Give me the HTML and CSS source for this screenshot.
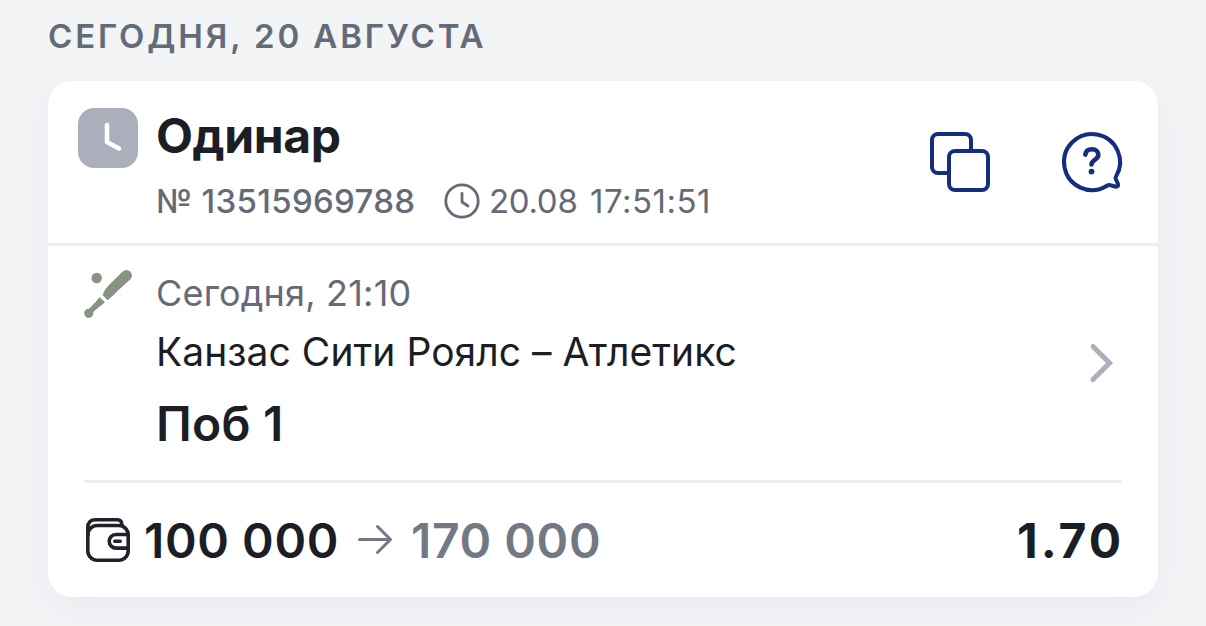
FILE: index.html
```html
<!DOCTYPE html>
<html lang="ru">
<head>
    <meta charset="UTF-8">
    <meta name="viewport" content="width=device-width, initial-scale=1.0">
    <title>История ставок</title>
    <link rel="stylesheet" href="styles.css">
</head>
<body>
    <h2 class="day-title">СЕГОДНЯ, 20 АВГУСТА</h2>
    <div class="bet-card">
        <div class="bet-header">
            <div class="bet-status">
                <svg width="60" height="60" viewBox="0 0 60 60" fill="none" stroke="#fff" stroke-width="4.6" stroke-linecap="round" stroke-linejoin="round">
                    <path d="M29 17v17l12 6.500"/>
                </svg>
            </div>
            <div class="bet-info">
                <div class="bet-type">Одинар</div>
                <div class="bet-meta">
                    <span class="bet-number">№ 13515969788</span>
                    <svg class="clock" width="36" height="36" viewBox="0 0 36 36" fill="none" stroke="#646a76" stroke-width="2.8" stroke-linecap="round" stroke-linejoin="round">
                        <circle cx="18" cy="18" r="16.2"/>
                        <path d="M18 10.500v8.500l6 4"/>
                    </svg>
                    <span class="bet-date">20.08</span>
                    <span class="bet-time">17:51:51</span>
                </div>
            </div>
            <div class="bet-actions">
                <svg width="60" height="60" viewBox="0 0 60 60" fill="none" stroke="#142d7d" stroke-width="4" stroke-linejoin="round">
                    <path d="M17 41H8a6 6 0 0 1-6-6V8a6 6 0 0 1 6-6h27a6 6 0 0 1 6 6v10"/>
                    <rect x="19" y="19" width="39" height="39" rx="6"/>
                </svg>
                <svg width="60" height="60" viewBox="0 0 60 60" fill="none" stroke="#142d7d" stroke-width="4" stroke-linecap="round" stroke-linejoin="round">
                    <path d="M54 44.500A28 28 0 1 0 44.500 54Q47 52.500 49.500 53.500L54 54.700Q56.500 55 56 52L53.800 47Q53.200 45.700 54 44.500Z"/>
                    <path d="M23.300 22.600C23.800 19.300 26.300 17.300 30 17.300c4 0 6.300 2.500 6.300 5.700 0 4.700-6.800 5-6.800 9.500" stroke-width="4.600"/>
                    <circle cx="29.500" cy="39.600" r="2.900" fill="#142d7d" stroke="none"/>
                </svg>
            </div>
        </div>

        <div class="event">
            <div class="sport">
                <svg width="48" height="48" viewBox="0 0 48 48" fill="#869581">
                    <circle cx="12.700" cy="8" r="5.200"/>
                    <path d="M18.500 25Q20 20 24.500 15.500L38 2Q42.500-1.800 46.400 1.600Q49.500 5.500 46.400 9.300L33 21.500Q28 27 23.600 30.300Z"/>
                    <path d="M15.500 27 21 32.200 17 35.500 9.200 42A4.600 4.600 0 1 1 5 38.700L12.500 31Z"/>
                </svg>
            </div>
            <div class="event-info">
                <div class="event-date">Сегодня, 21:10</div>
                <div class="event-teams">Канзас Сити Роялс – Атлетикс</div>
                <div class="event-outcome">Поб 1</div>
            </div>
            <svg class="chevron" width="24" height="40" viewBox="0 0 24 40" fill="none" stroke="#abafbc" stroke-width="5" stroke-linecap="round" stroke-linejoin="miter">
                <path d="M3 3.500 19.500 20 3 36.500"/>
            </svg>
        </div>

        <div class="bet-footer">
            <svg class="wallet" width="44" height="44" viewBox="0 0 44 44" fill="none" stroke="#1f2229" stroke-width="3.600" stroke-linecap="round" stroke-linejoin="round">
                <rect x="1.800" y="7.500" width="40.400" height="34.700" rx="9.500"/>
                <path d="M1.800 17V9.500C1.800 4.300 4.500 1.800 9.500 1.800H31.500Q36 1.800 36 7.500"/>
                <path d="M42 16.500H30a6.800 6.800 0 0 0 0 13.600h12M28.800 23.300h5.400"/>
            </svg>
            <span class="stake">100 000</span>
            <svg class="arrow" width="34" height="30" viewBox="0 0 34 30" fill="none" stroke="#727985" stroke-width="3" stroke-linecap="round" stroke-linejoin="round">
                <path d="M1.500 14.500h31M19.500 1.500 32.500 14.500 19.500 27.500"/>
            </svg>
            <span class="payout">170 000</span>
            <span class="odds">1.70</span>
        </div>
    </div>
</body>
</html>
```
FILE: styles.css
```css
body {
    font-family: Inter, sans-serif;
    margin: 0;
    padding: 0 48px;
    height: 626px;
    overflow: hidden;
    background-color: #f3f4f6;
    color: #1c1e25;
}

svg {
    display: block;
    flex-shrink: 0;
    overflow: visible;
}

.day-title {
    margin: 0;
    padding: 16px 0 25px;
    font-size: 33px;
    line-height: 40px;
    font-weight: 600;
    letter-spacing: 2.87px;
    color: #646b78;
    white-space: nowrap;
}

.bet-card {
    height: 516px;
    background-color: #fff;
    border-radius: 24px;
    box-shadow: 0 12px 36px rgba(50, 50, 90, 0.05);
    white-space: nowrap;
}

.bet-header {
    display: flex;
    height: 162px;
    border-bottom: 3px solid #eeeff2;
}

.bet-status {
    width: 60px;
    height: 60px;
    margin: 27px 18px 0 30px;
    border-radius: 16px;
    background-color: #abafbc;
}

.bet-info {
    flex: 1;
    padding-top: 25px;
}

.bet-type {
    font-size: 48px;
    line-height: 60px;
    font-weight: 700;
    letter-spacing: -0.4px;
}

.bet-meta {
    display: flex;
    align-items: center;
    height: 40px;
    margin-top: 15px;
    font-size: 33px;
    color: #646a76;
}

.bet-number {
    width: 288px;
    font-weight: 500;
    letter-spacing: 0.3px;
}

.bet-date {
    width: 101px;
    margin-left: 9px;
    letter-spacing: -0.3px;
}

.bet-time {
    letter-spacing: 0.5px;
}

.bet-actions {
    display: flex;
    gap: 72px;
    padding: 51px 36px 0 0;
}

.event {
    display: flex;
    height: 234px;
    margin: 0 36px;
    border-bottom: 3px solid #eeeff2;
}

.sport {
    width: 72px;
    padding-top: 24px;
}

.event-info {
    flex: 1;
    padding-top: 27px;
}

.event-date {
    font-size: 36px;
    line-height: 40px;
    letter-spacing: 0.2px;
    color: #646a76;
}

.event-teams {
    margin-top: 14px;
    font-size: 39px;
    line-height: 50px;
    letter-spacing: 0.04px;
}

.event-outcome {
    margin-top: 17px;
    font-size: 48px;
    line-height: 60px;
    font-weight: 600;
    letter-spacing: 0.2px;
}

.chevron {
    margin: 97px 8px 0 0;
}

.bet-footer {
    display: flex;
    align-items: center;
    height: 114px;
    padding: 0 34px 0 38px;
    font-size: 48px;
    font-weight: 600;
}

.stake {
    width: 194px;
    margin-left: 14px;
    margin-right: 20px;
    letter-spacing: 0.6px;
}

.payout {
    margin-left: 19px;
    letter-spacing: 0.6px;
    color: #727985;
}

.odds {
    margin-left: auto;
    font-weight: 700;
    letter-spacing: 3px;
}
```
